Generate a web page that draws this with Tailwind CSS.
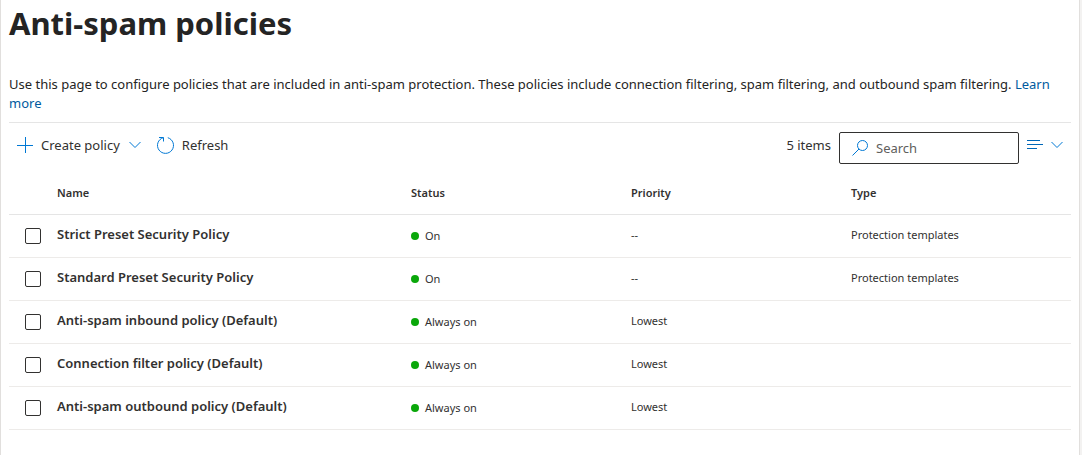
<!DOCTYPE html>
<html lang="en">
<head>
<meta charset="utf-8">
<title>Anti-spam policies</title>
<script src="https://cdn.jsdelivr.net/npm/@tailwindcss/browser@4"></script>
</head>
<body class="min-h-screen bg-[#f3f2f1] pr-[2px] font-['Noto_Sans','Open_Sans',sans-serif] text-[13px] leading-5 text-[#323130]">
<main class="min-h-screen border-x border-[#e1dfdd] bg-white pr-2 pl-2">
  <h1 class="pt-[3px] text-[31px] leading-[40px] font-bold text-[#242424]">Anti-spam policies</h1>
  <p class="mt-8 border-b border-[#e5e5e5] pb-[9px] text-[13px] leading-[19px] text-[#242424]">Use this page to configure policies that are included in anti-spam protection. These policies include connection filtering, spam filtering, and outbound spam filtering. <a href="#" class="text-[#005a9e]">Learn more</a></p>
  <div class="flex h-12 items-start pt-[9px]">
    <div class="flex h-[26px] items-center">
      <button type="button" class="ml-2 flex items-center">
        <svg class="size-4" viewBox="0 0 16 16" fill="none" stroke="#0078d4"><path d="M8.500 0V16M0 8.500H16"/></svg>
        <span class="ml-2">Create policy</span>
        <svg class="ml-[9px] h-2 w-3" viewBox="0 0 12 8" fill="none" stroke="#0078d4"><path d="M.5 1L6 6.500L11.500 1"/></svg>
      </button>
      <button type="button" class="ml-4 flex items-center">
        <svg class="h-[18px] w-[17px]" viewBox="0 0 17 18" fill="none" stroke="#0078d4"><path d="M2 1.500H6.500V5.500M6.200 1.700A8 8 0 1 0 10.800 1.700"/></svg>
        <span class="ml-2">Refresh</span>
      </button>
    </div>
    <div class="ml-auto flex">
      <span class="flex h-[26px] items-center">5 items</span>
      <label class="ml-2 flex h-8 w-[180px] items-center rounded-[2px] border border-[#323130] pl-3">
        <svg class="size-4 shrink-0" viewBox="0 0 16 16" fill="none" stroke="#0078d4"><circle cx="10.500" cy="5.500" r="5"/><path d="M7 9L.5 15.500"/></svg>
        <input type="search" aria-label="Search" placeholder="Search" class="ml-2 min-w-0 flex-1 bg-transparent outline-none placeholder:text-[#605e5c]">
      </label>
      <button type="button" aria-label="List options" class="mr-2 ml-2 flex h-[26px] items-center">
        <svg class="h-3 w-4" viewBox="0 0 16 12" fill="#0067b8"><path d="M0 1H13V2H0zM0 5H16V6H0zM0 9H10V10H0z"/></svg>
        <svg class="ml-2 h-2 w-3" viewBox="0 0 12 8" fill="none" stroke="#0078d4"><path d="M.5 1L6 6.500L11.500 1"/></svg>
      </button>
    </div>
  </div>
  <table class="w-full table-fixed border-collapse text-left text-[11px] leading-4">
    <colgroup><col class="w-12"><col class="w-[354px]"><col class="w-[220px]"><col class="w-[220px]"><col></colgroup>
    <thead>
      <tr class="h-[43px] border-b border-[#e5e5e5]"><td></td><th class="pt-[2px] font-semibold">Name</th><th class="pt-[2px] font-semibold">Status</th><th class="pt-[2px] font-semibold">Priority</th><th class="pt-[2px] font-semibold">Type</th></tr>
    </thead>
    <tbody>
      <tr class="h-[43px] border-b border-[#edebe9]"><td class="pl-4"><input type="checkbox" aria-labelledby="p1" class="block size-4 appearance-none rounded-[2px] border border-[#323130]"></td><th id="p1" class="pb-1 text-[13px] font-semibold">Strict Preset Security Policy</th><td><span class="flex items-center gap-[6px]"><i class="size-2 rounded-full bg-[#0aa70a]"></i>On</span></td><td class="pb-[2px]">--</td><td class="pb-[2px]">Protection templates</td></tr>
      <tr class="h-[43px] border-b border-[#edebe9]"><td class="pl-4"><input type="checkbox" aria-labelledby="p2" class="block size-4 appearance-none rounded-[2px] border border-[#323130]"></td><th id="p2" class="pb-1 text-[13px] font-semibold">Standard Preset Security Policy</th><td><span class="flex items-center gap-[6px]"><i class="size-2 rounded-full bg-[#0aa70a]"></i>On</span></td><td class="pb-[2px]">--</td><td class="pb-[2px]">Protection templates</td></tr>
      <tr class="h-[43px] border-b border-[#edebe9]"><td class="pl-4"><input type="checkbox" aria-labelledby="p3" class="block size-4 appearance-none rounded-[2px] border border-[#323130]"></td><th id="p3" class="pb-1 text-[13px] font-semibold">Anti-spam inbound policy (Default)</th><td><span class="flex items-center gap-[6px]"><i class="size-2 rounded-full bg-[#0aa70a]"></i>Always on</span></td><td class="pb-[2px]">Lowest</td><td></td></tr>
      <tr class="h-[43px] border-b border-[#edebe9]"><td class="pl-4"><input type="checkbox" aria-labelledby="p4" class="block size-4 appearance-none rounded-[2px] border border-[#323130]"></td><th id="p4" class="pb-1 text-[13px] font-semibold">Connection filter policy (Default)</th><td><span class="flex items-center gap-[6px]"><i class="size-2 rounded-full bg-[#0aa70a]"></i>Always on</span></td><td class="pb-[2px]">Lowest</td><td></td></tr>
      <tr class="h-[43px] border-b border-[#edebe9]"><td class="pl-4"><input type="checkbox" aria-labelledby="p5" class="block size-4 appearance-none rounded-[2px] border border-[#323130]"></td><th id="p5" class="pb-1 text-[13px] font-semibold">Anti-spam outbound policy (Default)</th><td><span class="flex items-center gap-[6px]"><i class="size-2 rounded-full bg-[#0aa70a]"></i>Always on</span></td><td class="pb-[2px]">Lowest</td><td></td></tr>
    </tbody>
  </table>
</main>
</body>
</html>
